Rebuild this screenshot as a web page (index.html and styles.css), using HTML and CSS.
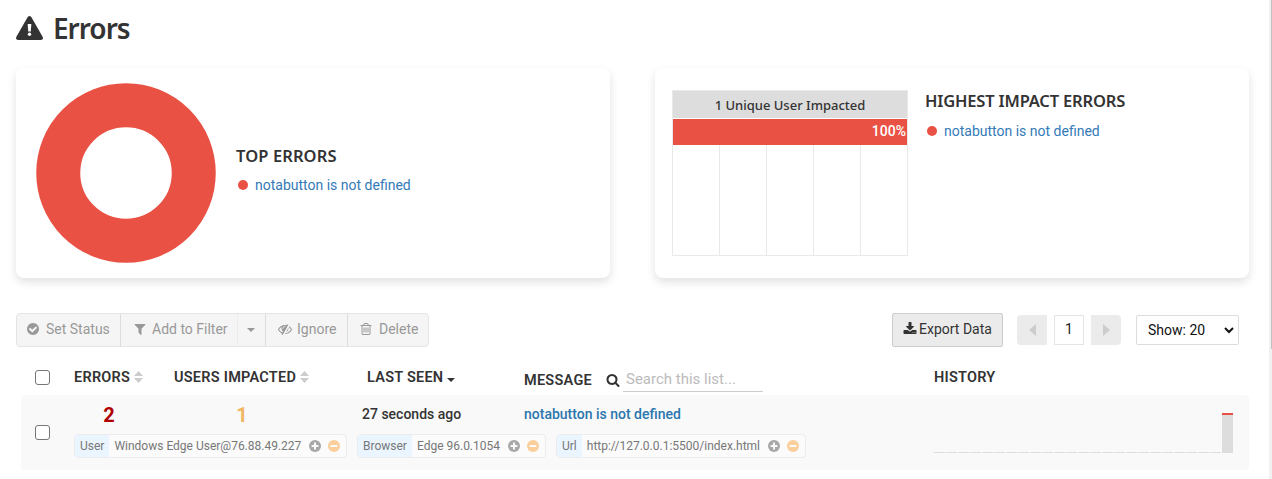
FILE: index.html
```html
<!DOCTYPE html>
<html lang="en">
<head>
<meta charset="utf-8">
<title>Errors</title>
<link rel="stylesheet" href="styles.css">
</head>
<body>
<svg width="0" height="0" class="defs">
  <symbol id="plus" viewBox="0 0 12 12"><circle cx="6" cy="6" r="6"/><path d="M6 2.6v6.8M2.6 6h6.8" stroke="#fafafa" stroke-width="2"/></symbol>
  <symbol id="minus" viewBox="0 0 12 12"><circle cx="6" cy="6" r="6"/><path d="M2.6 6h6.8" stroke="#fafafa" stroke-width="2"/></symbol>
  <symbol id="sort" viewBox="0 0 9 12"><path d="M4.5 0L9 5H0zM0 7h9l-4.500 5z"/></symbol>
</svg>
<div class="page">
  <main class="main">
    <header class="title">
      <svg class="warn" viewBox="0 0 27 24"><path d="M11.700 1.100Q13.500-1 15.300 1.100L26.600 20.800Q27.700 23.700 24.800 24H2.200Q-.7 23.700.4 20.800z"/><path d="M11.700 8h3.600l-.5 7.600h-2.600z" fill="#fff"/><circle cx="13.500" cy="18.200" r="1.700" fill="#fff"/></svg>
      <h1>Errors</h1>
    </header>

    <section class="cards">
      <article class="card card-top">
        <svg class="donut" viewBox="0 0 180 180"><circle cx="90" cy="90" r="67.750" fill="none" stroke="#e95144" stroke-width="44"/></svg>
        <div class="legend">
          <h2>TOP ERRORS</h2>
          <a class="entry"><i class="dot"></i><span>notabutton is not defined</span></a>
        </div>
      </article>
      <article class="card card-impact">
        <div class="impact">
          <div class="impact-head">1 Unique User Impacted</div>
          <div class="impact-bar">100%</div>
          <div class="impact-grid"><i></i><i></i><i></i><i></i></div>
        </div>
        <div class="legend">
          <h2>HIGHEST IMPACT ERRORS</h2>
          <a class="entry"><i class="dot"></i><span>notabutton is not defined</span></a>
        </div>
      </article>
    </section>

    <section class="toolbar">
      <div class="group">
        <div class="btn b-status"><svg class="ic" viewBox="0 0 1792 1792"><path d="M1412 734q0-28-18-46l-91-90q-19-19-45-19t-45 19l-408 407-226-226q-19-19-45-19t-45 19l-91 90q-18 18-18 46 0 27 18 45l362 362q19 19 45 19 27 0 46-19l543-543q18-18 18-45zm252 162q0 209-103 385.500t-279.500 279.500-385.500 103-385.500-103-279.500-279.500-103-385.500 103-385.500 279.500-279.500 385.500-103 385.500 103 279.500 279.500 103 385.500z"/></svg><span>Set Status</span></div>
        <div class="btn b-filter"><svg class="ic" viewBox="0 0 1792 1792"><path d="M1595 295q17 41-14 70l-493 493v742q0 42-39 59-13 5-25 5-27 0-45-19l-256-256q-19-19-19-45v-486l-493-493q-31-29-14-70 17-39 59-39h1280q42 0 59 39z"/></svg><span>Add to Filter</span></div>
        <div class="btn b-caret"><svg class="caret" viewBox="0 0 8 4"><path d="M0 0h8l-4 4z"/></svg></div>
        <div class="btn b-ignore"><svg class="ic" viewBox="0 0 1792 1792"><path d="M555 1335l78-141q-87-63-136-159t-49-203q0-121 61-225-229 117-381 353 167 258 427 375zm389-759q0-20-14-34t-34-14q-125 0-214.500 89.500t-89.500 214.500q0 20 14 34t34 14 34-14 14-34q0-86 61-147t147-61q20 0 34-14t14-34zm363-191q0 7-1 9-105 188-315 566t-316 567l-49 89q-10 16-28 16-12 0-134-70-16-10-16-28 0-12 44-87-143-65-263.500-173t-208.500-245q-20-31-20-69t20-69q153-235 380-371t496-136q89 0 180 17l54-97q10-16 28-16 5 0 18 6t31 15.500 33 18.500 31.500 18.500 19.500 11.500q16 10 16 27zm37 447q0 139-79 253.500t-209 164.500l280-502q8 45 8 84zm448 128q0 35-20 69-39 64-109 145-150 172-347.500 267t-419.500 95l74-132q212-18 392.500-137t301.500-307q-115-179-282-294l63-112q95 64 182.500 153t144.500 184q20 34 20 69z"/></svg><span>Ignore</span></div>
        <div class="btn b-delete"><svg class="ic" viewBox="0 0 1792 1792"><path d="M704 736v576q0 14-9 23t-23 9h-64q-14 0-23-9t-9-23v-576q0-14 9-23t23-9h64q14 0 23 9t9 23zm256 0v576q0 14-9 23t-23 9h-64q-14 0-23-9t-9-23v-576q0-14 9-23t23-9h64q14 0 23 9t9 23zm256 0v576q0 14-9 23t-23 9h-64q-14 0-23-9t-9-23v-576q0-14 9-23t23-9h64q14 0 23 9t9 23zm128 724v-948h-896v948q0 22 7 40.500t14.500 27 10.500 8.500h832q3 0 10.500-8.500t14.500-27 7-40.500zm-672-1076h448l-48-117q-7-9-17-11h-317q-10 2-17 11zm928 32v64q0 14-9 23t-23 9h-96v948q0 83-47 143.500t-113 60.500h-832q-66 0-113-58.500t-47-141.500v-952h-96q-14 0-23-9t-9-23v-64q0-14 9-23t23-9h309l70-167q15-37 54-63t79-26h320q40 0 79 26t54 63l70 167h309q14 0 23 9t9 23z"/></svg><span>Delete</span></div>
      </div>
      <div class="export"><svg class="ic" viewBox="0 0 1792 1792"><path d="M1344 1344q0-26-19-45t-45-19-45 19-19 45 19 45 45 19 45-19 19-45zm256 0q0-26-19-45t-45-19-45 19-19 45 19 45 45 19 45-19 19-45zm128-224v320q0 40-28 68t-68 28h-1472q-40 0-68-28t-28-68v-320q0-40 28-68t68-28h465l135 136q58 56 136 56t136-56l136-136h464q40 0 68 28t28 68zm-325-569q17 41-14 70l-448 448q-18 19-45 19t-45-19l-448-448q-31-29-14-70 17-39 59-39h256v-448q0-26 19-45t45-19h256q26 0 45 19t19 45v448h256q42 0 59 39z"/></svg><span>Export Data</span></div>
      <div class="pager">
        <div class="pg pg-prev"><svg viewBox="0 0 7 12"><path d="M7 0v12L0 6z"/></svg></div>
        <div class="pg pg-num">1</div>
        <div class="pg pg-next"><svg viewBox="0 0 7 12"><path d="M0 0v12l7-6z"/></svg></div>
      </div>
      <div class="select"><span>Show: 20</span><svg viewBox="0 0 10 7"><path d="M1 1l4 4 4-4" fill="none" stroke="#111" stroke-width="2"/></svg></div>
    </section>

    <section class="table">
      <div class="thead">
        <i class="check"></i>
        <div class="th th-errors"><span>ERRORS</span><svg class="sort"><use href="#sort"/></svg></div>
        <div class="th th-users"><span>USERS IMPACTED</span><svg class="sort"><use href="#sort"/></svg></div>
        <div class="th th-seen"><span>LAST SEEN</span><svg class="caret" viewBox="0 0 8 4"><path d="M0 0h8l-4 4z"/></svg></div>
        <div class="th th-msg"><span class="label">MESSAGE</span><svg class="ic" viewBox="0 0 1792 1792"><path d="M1216 832q0-185-131.500-316.500t-316.500-131.500-316.500 131.500-131.500 316.500 131.500 316.500 316.500 131.500 316.500-131.500 131.500-316.500zm512 832q0 52-38 90t-90 38q-54 0-90-38l-343-342q-179 124-399 124-143 0-273.500-55.500t-225-150-150-225-55.500-273.500 55.500-273.500 150-225 225-150 273.500-55.500 273.500 55.500 225 150 150 225 55.500 273.500q0 220-124 399l343 343q37 37 37 90z"/></svg><span class="search">Search this list...</span></div>
        <div class="th th-hist"><span>HISTORY</span></div>
      </div>
      <div class="row">
        <i class="check"></i>
        <div class="detail">
          <div class="cells">
            <b class="count">2</b>
            <b class="users">1</b>
            <span class="seen">27 seconds ago</span>
            <a class="msg">notabutton is not defined</a>
          </div>
          <div class="tags">
            <div class="tag tag-user"><span class="key">User</span><span class="val">Windows Edge User@76.88.49.227</span><svg class="add"><use href="#plus"/></svg><svg class="sub"><use href="#minus"/></svg></div>
            <div class="tag tag-browser"><span class="key">Browser</span><span class="val">Edge 96.0.1054</span><svg class="add"><use href="#plus"/></svg><svg class="sub"><use href="#minus"/></svg></div>
            <div class="tag tag-url"><span class="key">Url</span><span class="val">http://127.0.0.1:5500/index.html</span><svg class="add"><use href="#plus"/></svg><svg class="sub"><use href="#minus"/></svg></div>
          </div>
        </div>
        <div class="history"><i></i><i></i><i></i><i></i><i></i><i></i><i></i><i></i><i></i><i></i><i></i><i></i><i></i><i></i><i></i><i></i><i></i><i></i><i></i><i></i><i></i><i></i><i></i><i></i><i class="peak"></i></div>
      </div>
    </section>
  </main>
  <div class="scroll"><div class="thumb"></div></div>
</div>
</body>
</html>
```
FILE: styles.css
```css
* { box-sizing: border-box; }
body { margin: 0; background: #fff; color: #333; font: 14px/20px Roboto, sans-serif; overflow: hidden; }
.defs { position: absolute; }
.page { display: flex; height: 479px; white-space: nowrap; }
.main { width: 1269px; }
.scroll { width: 3px; background: #f1f1f1; padding-left: 2px; }
.thumb { height: 349px; background: #c1c1c1; }
svg { display: block; flex: none; fill: currentColor; }
.ic { width: 14px; height: 14px; }
.caret { width: 8px; height: 4px; }
h1, h2 { margin: 0; font-family: "Noto Sans", sans-serif; font-weight: 600; }

.title { display: flex; height: 68px; padding: 16px 0 0 16px; gap: 10px; }
.warn { width: 27px; height: 24px; }
h1 { font-size: 28px; line-height: 24px; letter-spacing: -1px; }

.cards { display: flex; gap: 45px; padding-left: 16px; height: 245px; }
.card { display: flex; width: 594px; height: 210px; border-radius: 8px; background: #fff; box-shadow: 0 4px 10px rgba(0, 0, 0, .12); }
.card-top { padding: 15px 20px; gap: 20px; }
.donut { width: 180px; height: 180px; }
.card-top .legend { padding-top: 62px; }
h2 { font-size: 16.500px; line-height: 22px; letter-spacing: -0.180px; }
.card-top h2 { letter-spacing: 0.100px; }
.entry { display: flex; align-items: center; margin-top: 9px; padding-left: 2px; gap: 7px; height: 20px; color: #337ab7; }
.card-top .entry { margin-top: 8px; }
.dot { width: 10px; height: 10px; border-radius: 50%; background: #e95144; }
.card-impact { padding: 22px 17px; gap: 17px; }
.impact { width: 236px; height: 166px; border: 1px solid #e9e9e9; display: flex; flex-direction: column; }
.impact-head { height: 27px; background: #ddd; text-align: center; font: 500 13px/28px "Noto Sans", sans-serif; }
.impact-bar { height: 26px; margin-top: 1px; background: #e95144; color: #fff; font: 500 14px/25px Roboto, sans-serif; text-align: right; padding-right: 1px; }
.impact-grid { display: flex; flex: 1; }
.impact-grid i { width: 47px; flex: none; border-right: 1px solid #e9e9e9; }

.toolbar { display: flex; height: 34px; padding-left: 16px; }
.group { display: flex; width: 413px; height: 34px; background: #f5f5f5; border: 1px solid #e4e4e4; border-radius: 4px; color: #999; }
.btn { display: flex; align-items: center; padding: 0 0 2px 9px; gap: 6px; border-right: 1px solid #ddd; }
.btn:last-child { border: 0; }
.b-status { width: 104px; }
.b-filter { width: 117px; padding-left: 12px; gap: 5px; border-color: #ececec; }
.b-caret { width: 28px; padding: 0 0 0 9px; }
.b-ignore { width: 82px; padding-left: 12px; gap: 5px; }
.b-delete { padding-left: 11px; }
.export { display: flex; align-items: center; width: 111px; height: 34px; margin-left: 463px; padding: 0 0 2px 10px; gap: 2px; background: #ebebeb; border: 1px solid #ccc; border-radius: 2px; }
.pager { display: flex; gap: 7px; padding-top: 2px; margin-left: 14px; }
.pg { display: flex; align-items: center; justify-content: center; width: 30px; height: 30px; background: #ebebeb; color: #ccc; }
.pg svg { width: 7px; height: 12px; }
.pg-prev { border-radius: 4px 0 0 4px; }
.pg-next { border-radius: 0 4px 4px 0; }
.pg-num { background: #fff; border: 1px solid #e5e5e5; color: #222; padding-bottom: 2px; }
.select { display: flex; align-items: center; justify-content: space-between; width: 103px; height: 30px; margin: 2px 0 0 15px; padding: 0 4px 0 11px; border: 1px solid #ddd; border-radius: 2px; color: #111; }
.select svg { width: 10px; height: 7px; }

.table { padding-left: 21px; }
.thead { display: flex; height: 48px; padding: 20px 0 0 14px; font-weight: 600; font-size: 14.500px; letter-spacing: .25px; }
.th > span:first-child { padding-top: 1px; }
.check { display: block; width: 15px; height: 15px; margin-top: 3px; border: 1px solid #767676; border-radius: 3px; background: #fff; flex: none; }
.th { display: flex; flex: none; }
.sort { width: 9px; height: 12px; color: #ccc; margin: 4px 0 0 4px; }
.th-errors { width: 99px; margin-left: 24px; }
.th-users { width: 193px; margin-left: 1px; }
.th-seen { width: 157px; }
.th-seen .caret { margin: 11px 0 0 4px; }
.th-msg { width: 410px; padding-top: 3px; }
.th-msg .label { width: 69px; }
.th-msg .ic { margin: 3px 3px 0 13px; }
.search { width: 140px; height: 22px; padding-left: 3px; border-bottom: 1px solid #ccc; color: #bbb; font-weight: 400; font-size: 15px; line-height: 18px; letter-spacing: 0; }

.row { display: flex; width: 1228px; height: 75px; padding-left: 14px; background: #f9f9f9; border-radius: 4px; }
.row .check { margin-top: 30px; }
.detail { width: 859px; margin-left: 24px; padding-top: 9px; }
.cells { display: flex; height: 30px; font-weight: 500; }
.count, .users { font-size: 20px; line-height: 22px; font-weight: 700; text-align: center; }
.count { width: 70px; color: #b00000; }
.users { width: 136px; margin-left: 30px; color: #f0b661; }
.seen { margin-left: 52px; width: 162px; }
.msg { color: #2a76ad; }
.tags { display: flex; gap: 10px; }
.tag { display: flex; align-items: center; height: 24px; border: 1px solid #ececec; border-radius: 4px; background: #fbfbfb; color: #777; font-size: 12px; }
.tag-user { width: 273px; }
.tag-browser { width: 189px; }
.tag-url { width: 250px; }
.key { height: 22px; line-height: 22px; padding: 0 5px; margin-right: 5px; background: #ebf5ff; }
.val { flex: 1; }
.tag svg { width: 12px; height: 12px; }
.add { margin-right: 7px; color: #a8a8a8; }
.sub { margin-right: 6px; color: #fbcf9b; }
.history { display: flex; align-items: flex-end; gap: 1px; height: 58px; margin-left: 1px; }
.history i { width: 11px; height: 1px; background: #ddd; }
.history .peak { height: 40px; border-top: 2px solid #e95144; }
```
